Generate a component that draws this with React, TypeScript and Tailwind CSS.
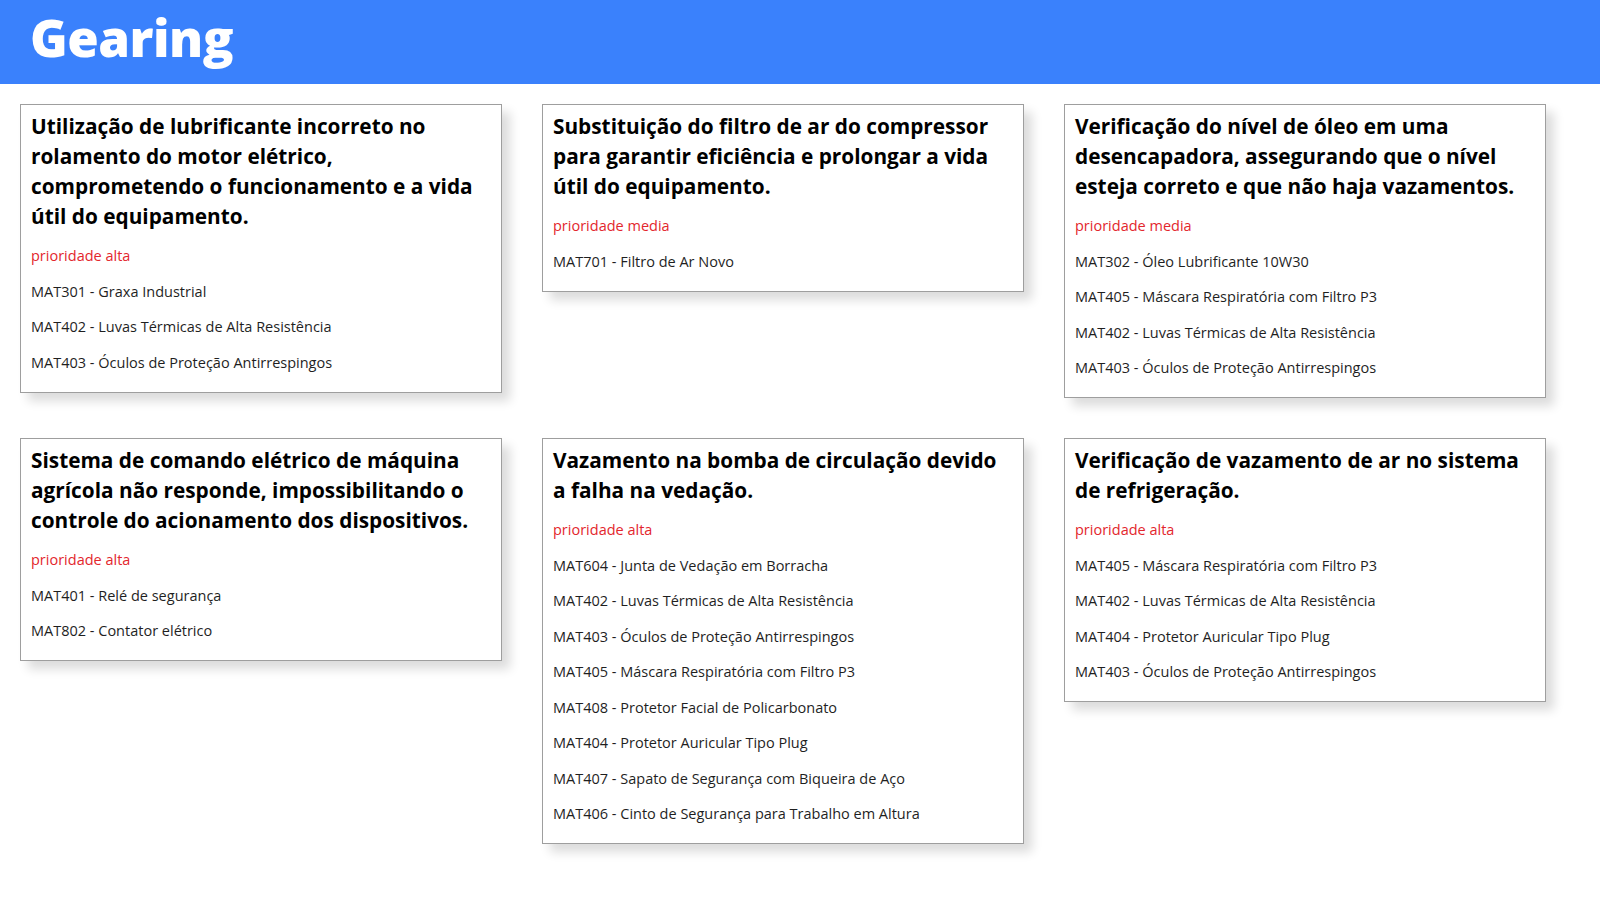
import React from "react";

type Priority = "alta" | "media";

type Order = {
  id: number;
  title: string[];
  priority: Priority;
  materials: string[];
};

const ORDERS: Order[] = [
  {
    id: 1,
    title: [
      "Utilização de lubrificante incorreto no",
      "rolamento do motor elétrico,",
      "comprometendo o funcionamento e a vida",
      "útil do equipamento.",
    ],
    priority: "alta",
    materials: [
      "MAT301 - Graxa Industrial",
      "MAT402 - Luvas Térmicas de Alta Resistência",
      "MAT403 - Óculos de Proteção Antirrespingos",
    ],
  },
  {
    id: 2,
    title: [
      "Substituição do filtro de ar do compressor",
      "para garantir eficiência e prolongar a vida",
      "útil do equipamento.",
    ],
    priority: "media",
    materials: ["MAT701 - Filtro de Ar Novo"],
  },
  {
    id: 3,
    title: [
      "Verificação do nível de óleo em uma",
      "desencapadora, assegurando que o nível",
      "esteja correto e que não haja vazamentos.",
    ],
    priority: "media",
    materials: [
      "MAT302 - Óleo Lubrificante 10W30",
      "MAT405 - Máscara Respiratória com Filtro P3",
      "MAT402 - Luvas Térmicas de Alta Resistência",
      "MAT403 - Óculos de Proteção Antirrespingos",
    ],
  },
  {
    id: 4,
    title: [
      "Sistema de comando elétrico de máquina",
      "agrícola não responde, impossibilitando o",
      "controle do acionamento dos dispositivos.",
    ],
    priority: "alta",
    materials: ["MAT401 - Relé de segurança", "MAT802 - Contator elétrico"],
  },
  {
    id: 5,
    title: ["Vazamento na bomba de circulação devido", "a falha na vedação."],
    priority: "alta",
    materials: [
      "MAT604 - Junta de Vedação em Borracha",
      "MAT402 - Luvas Térmicas de Alta Resistência",
      "MAT403 - Óculos de Proteção Antirrespingos",
      "MAT405 - Máscara Respiratória com Filtro P3",
      "MAT408 - Protetor Facial de Policarbonato",
      "MAT404 - Protetor Auricular Tipo Plug",
      "MAT407 - Sapato de Segurança com Biqueira de Aço",
      "MAT406 - Cinto de Segurança para Trabalho em Altura",
    ],
  },
  {
    id: 6,
    title: ["Verificação de vazamento de ar no sistema", "de refrigeração."],
    priority: "alta",
    materials: [
      "MAT405 - Máscara Respiratória com Filtro P3",
      "MAT402 - Luvas Térmicas de Alta Resistência",
      "MAT404 - Protetor Auricular Tipo Plug",
      "MAT403 - Óculos de Proteção Antirrespingos",
    ],
  },
];

function OrderCard({ order }: { order: Order }) {
  return (
    <div className="m-[20px] w-[482px] border border-[#9e9e9e] bg-white px-[10px] pt-[6px] pb-[19px] shadow-[8px_8px_10px_rgba(0,0,0,0.14)]">
      <h2 className="text-[20.8px] font-bold leading-[30px] text-black">
        {order.title.map((line, i) => (
          <span key={i} className="block whitespace-nowrap">
            {line}
          </span>
        ))}
      </h2>
      <div className="mt-[15px] flex flex-col gap-[15.5px] text-[14.5px] leading-[20px]">
        <p className="text-[#e3262d]">prioridade {order.priority}</p>
        {order.materials.map((m, i) => (
          <p key={i} className="text-[#1f1f1f]">
            {m}
          </p>
        ))}
      </div>
    </div>
  );
}

export default function App() {
  return (
    <div className="min-h-screen bg-white font-['Open_Sans',sans-serif]">
      <header className="flex h-[84px] items-start bg-[#3a81fc] px-[30px]">
        <h1 className="text-[51px] font-extrabold leading-[74px] tracking-[-0.5px] text-white">
          Gearing
        </h1>
      </header>

      <main className="flex flex-wrap items-start">
        {ORDERS.map((order) => (
          <OrderCard key={order.id} order={order} />
        ))}
      </main>
    </div>
  );
}
